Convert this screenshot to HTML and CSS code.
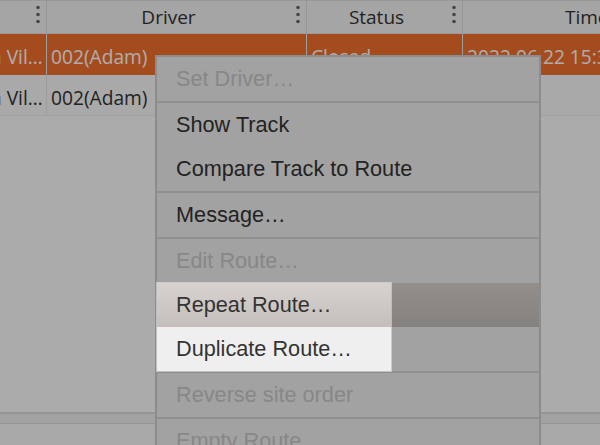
FILE: index.html
```html
<!DOCTYPE html>
<html>
<head>
<meta charset="utf-8">
<link rel="stylesheet" href="styles.css">
</head>
<body>
<div class="page">
  <div class="grid">
    <div class="hcell"><span class="htext"></span><svg class="kebab" width="16" height="32" viewBox="0 0 16 32"><circle cx="8" cy="6.5" r="1.8"/><circle cx="8" cy="13.5" r="1.8"/><circle cx="8" cy="20.5" r="1.8"/></svg></div>
    <div class="hcell"><span class="htext">Driver</span><svg class="kebab" width="16" height="32" viewBox="0 0 16 32"><circle cx="8" cy="6.5" r="1.8"/><circle cx="8" cy="13.5" r="1.8"/><circle cx="8" cy="20.5" r="1.8"/></svg></div>
    <div class="hcell"><span class="htext">Status</span><svg class="kebab" width="16" height="32" viewBox="0 0 16 32"><circle cx="8" cy="6.5" r="1.8"/><circle cx="8" cy="13.5" r="1.8"/><circle cx="8" cy="20.5" r="1.8"/></svg></div>
    <div class="hcell"><span class="htext">Time</span><svg class="kebab" width="16" height="32" viewBox="0 0 16 32"><circle cx="8" cy="6.5" r="1.8"/><circle cx="8" cy="13.5" r="1.8"/><circle cx="8" cy="20.5" r="1.8"/></svg></div>

    <div class="cell sel first">a Vil…</div>
    <div class="cell sel">002(Adam)</div>
    <div class="cell sel">Closed</div>
    <div class="cell sel">2022.06.22 15:30</div>

    <div class="cell first">a Vil…</div>
    <div class="cell">002(Adam)</div>
    <div class="cell"></div>
    <div class="cell"></div>
  </div>
  <div class="empty"></div>
  <div class="hbar"></div>
  <div class="bottom"></div>
</div>

<div class="menu">
  <div class="item dis">Set Driver…</div>
  <div class="item sep">Show Track</div>
  <div class="item">Compare Track to Route</div>
  <div class="item sep">Message…</div>
  <div class="item sep dis">Edit Route…</div>
  <div class="item hi">Repeat Route…</div>
  <div class="item">Duplicate Route…</div>
  <div class="item sep dis">Reverse site order</div>
  <div class="item sep dis">Empty Route</div>
</div>

<div class="spot"></div>
</body>
</html>
```

FILE: styles.css
```css
* { box-sizing: border-box; }
html, body {
  margin: 0;
  padding: 0;
  width: 600px;
  height: 445px;
  overflow: hidden;
}
body {
  position: relative;
  background: #fbfbfb;
  font-family: "Open Sans", "Liberation Sans", sans-serif;
}
.page {
  width: 600px;
  height: 445px;
  display: flex;
  flex-direction: column;
  overflow: hidden;
}
.grid {
  display: grid;
  grid-template-columns: 47px 260px 156px 220px;
  grid-auto-rows: auto;
  flex: none;
}
.hcell {
  height: 34px;
  display: flex;
  align-items: center;
  background: #f4f4f4;
  border-top: 1px solid #e0e0e0;
  border-bottom: 1px solid #e2e2e2;
  border-right: 1px solid #dcdcdc;
  color: #333;
  font-size: 19px;
  overflow: hidden;
}
.htext {
  flex: 1;
  text-align: center;
  white-space: nowrap;
}
.grid .hcell:nth-child(4) .htext {
  text-align: left;
  padding-left: 102px;
}
.kebab {
  flex: none;
  fill: #676767;
}
.cell {
  height: 41px;
  display: flex;
  align-items: center;
  padding: 5px 4px 0;
  background: #f9f9f9;
  border-right: 1px solid #e6e6e6;
  border-bottom: 1px solid #ececec;
  color: #333;
  font-size: 19.2px;
  white-space: nowrap;
  overflow: hidden;
}
.cell.sel {
  background: #f4702f;
  color: #ffffff;
  border-right-color: #e9e9e9;
  border-bottom-color: #f4702f;
}
.cell.first {
  padding-left: 0;
  text-indent: -9px;
}
.empty {
  flex: 1;
  background: #fcfcfc;
}
.hbar {
  flex: none;
  height: 12px;
  background: #efefef;
  border-top: 2px solid #dcdcdc;
  border-bottom: 1px solid #dcdcdc;
}
.bottom {
  flex: none;
  height: 21px;
  background: #f8f8f8;
}
.menu {
  position: absolute;
  left: 155px;
  top: 55px;
  width: 386px;
  background: #f0eff0;
  border: 2px solid #cfcfcf;
  font-family: "Liberation Sans", Arial, sans-serif;
  font-size: 21.7px;
  color: #333;
}
.item {
  height: 44px;
  line-height: 44px;
  padding-left: 19px;
  white-space: nowrap;
}
.item.sep {
  height: 46px;
  border-top: 2px solid #d3d3d3;
}
.item.dis {
  color: #c8c8c8;
}
.item.hi {
  background: linear-gradient(#d7d2cf, #c4bfbb);
}
.spot {
  position: absolute;
  left: 157px;
  top: 283px;
  width: 234px;
  height: 88px;
  pointer-events: none;
  box-shadow: 0 0 0 1px rgba(255, 255, 255, 0.45), 0 0 0 2000px rgba(0, 0, 0, 0.32);
}
```
